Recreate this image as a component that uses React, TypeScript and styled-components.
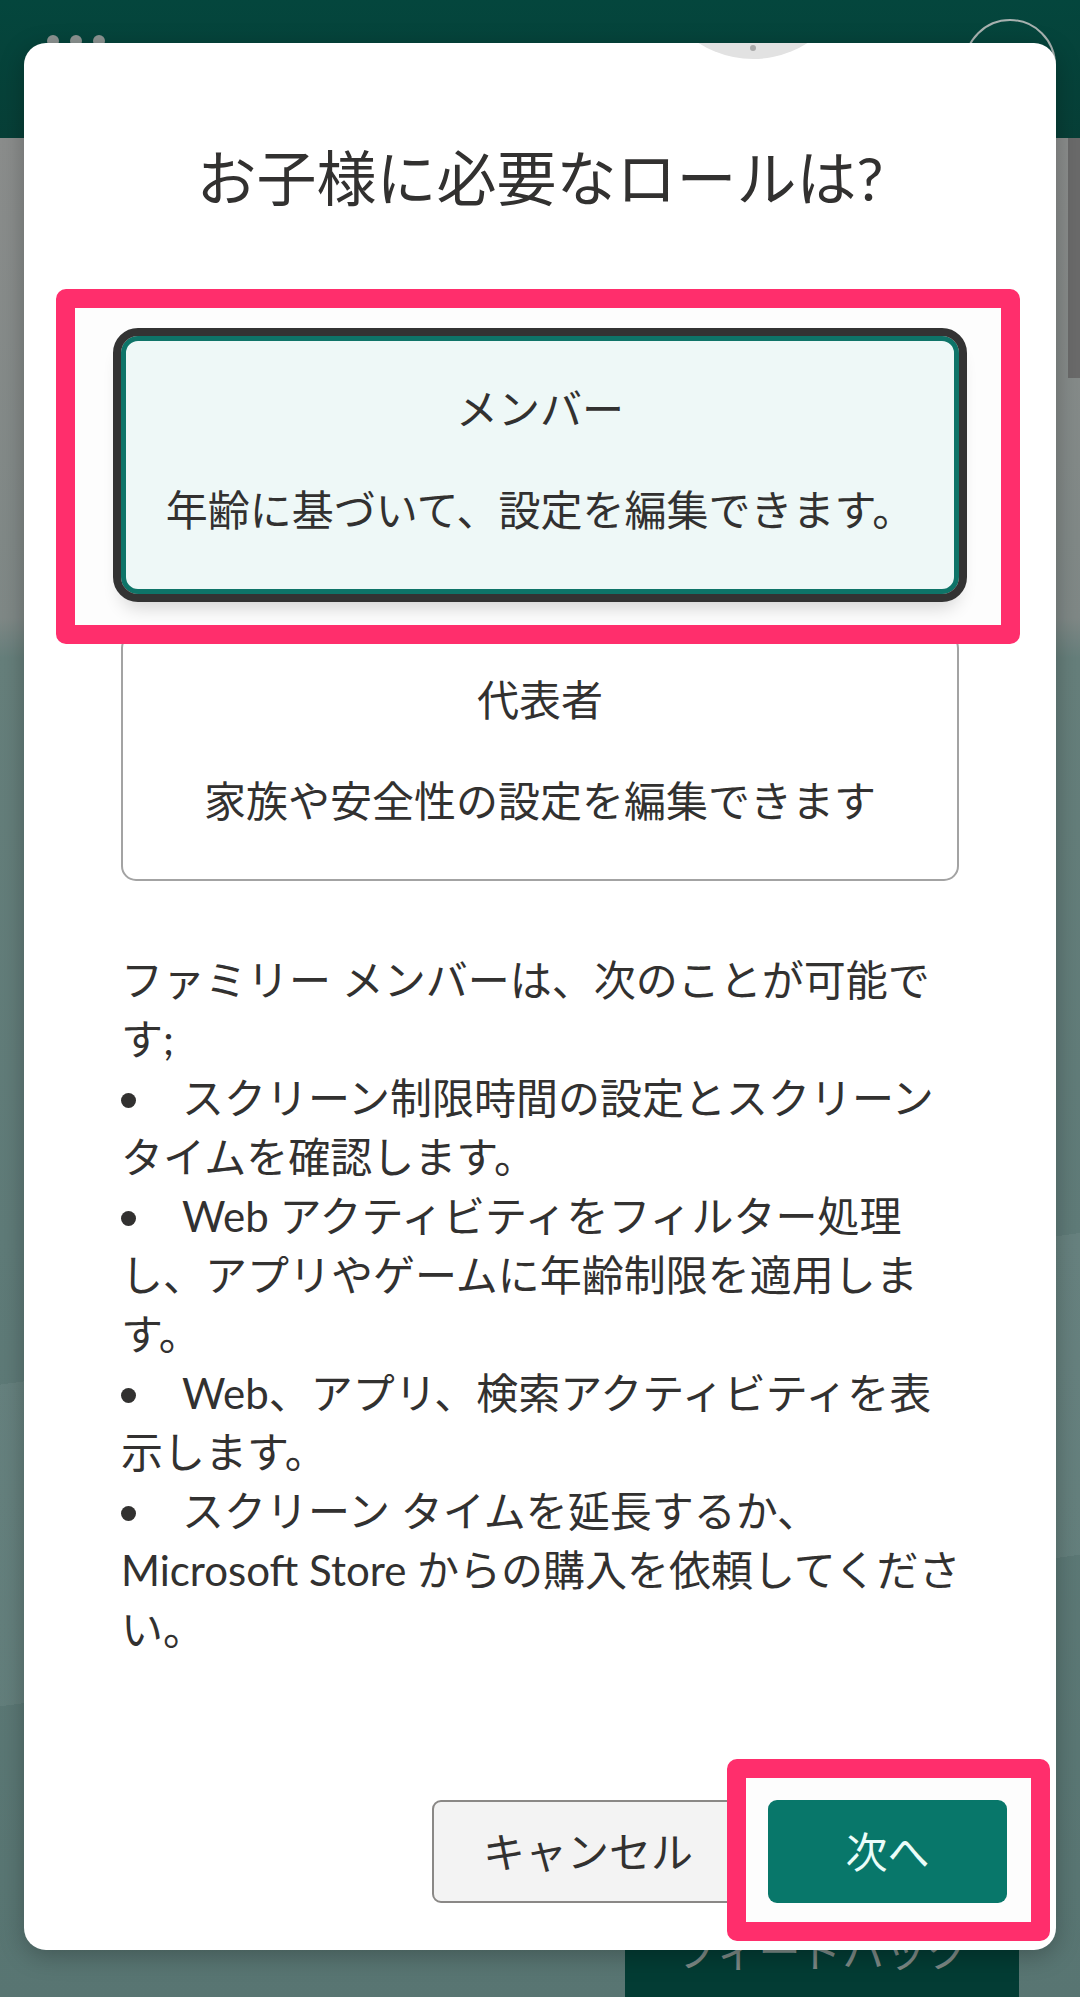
import React from 'react';
import styled, { createGlobalStyle } from 'styled-components';

const GlobalStyle = createGlobalStyle`
  html, body {
    margin: 0;
    padding: 0;
    background: #5d7a77;
  }
  * {
    box-sizing: border-box;
  }
`;

const FONT = `"Lato", "Noto Sans CJK JP", sans-serif`;

const Page = styled.div`
  position: relative;
  width: 1080px;
  height: 1997px;
  overflow: hidden;
  display: flex;
  flex-direction: column;
  font-family: ${FONT};
`;

const AppHeader = styled.header`
  position: relative;
  height: 138px;
  flex-shrink: 0;
  background: linear-gradient(180deg, #04463d 0%, #073f37 100%);
  display: flex;
  align-items: flex-start;
  padding: 35px 0 0 47px;
`;

const MoreDots = styled.div`
  display: flex;
  gap: 11px;
`;

const Dot = styled.span`
  width: 12px;
  height: 12px;
  border-radius: 50%;
  background: #8c9391;
`;

const Ring = styled.div`
  position: absolute;
  left: 964px;
  top: 19px;
  width: 92px;
  height: 92px;
  border-radius: 50%;
  border: 2px solid #a7b1af;
`;

const Backdrop = styled.div`
  position: relative;
  flex: 1;
  background:
    linear-gradient(172deg, transparent 0 62%, rgba(255, 255, 255, 0.05) 62% 78%, transparent 78%),
    linear-gradient(180deg, #8b8d8c 0px, #7f8886 480px, #667f7b 520px, #5f7b78 1100px, #587572 1860px);
`;

const ScrollThumb = styled.div`
  position: absolute;
  right: 0;
  top: 0;
  width: 12px;
  height: 240px;
  background: #6a6a6a;
`;

const FeedbackButton = styled.div`
  position: absolute;
  left: 625px;
  top: 1780px;
  width: 394px;
  height: 130px;
  border-radius: 16px;
  background: #033c34;
  color: #7b8784;
  font-size: 42px;
  display: flex;
  justify-content: center;
`;

const Dialog = styled.section`
  position: absolute;
  left: 24px;
  top: 43px;
  width: 1032px;
  height: 1907px;
  border-radius: 22px;
  overflow: hidden;
  background: #ffffff;
  box-shadow: 0 6px 24px rgba(0, 0, 0, 0.25);
  display: flex;
  flex-direction: column;
  padding: 98px 49px 47px;
  color: #323130;
`;

const Illustration = styled.div`
  position: absolute;
  left: 628px;
  top: -186px;
  width: 202px;
  height: 202px;
  border-radius: 50%;
  background: #e2e2e2;
  &::after {
    content: '';
    position: absolute;
    left: 98px;
    top: 188px;
    width: 6px;
    height: 6px;
    border-radius: 50%;
    background: #a9a9a9;
  }
`;

const Title = styled.h1`
  margin: 0 0 120px;
  font-size: 60px;
  line-height: 75px;
  font-weight: 400;
  text-align: center;
  color: #323130;
`;

const Column = styled.div`
  padding: 0 48px;
  display: flex;
  flex-direction: column;
`;

const Highlight = styled.div<{ $top: number; $right: number; $bottom: number; $left: number }>`
  position: relative;
  z-index: 1;
  &::before {
    content: '';
    position: absolute;
    z-index: -1;
    top: -${(p) => p.$top}px;
    right: -${(p) => p.$right}px;
    bottom: -${(p) => p.$bottom}px;
    left: -${(p) => p.$left}px;
    border: 19px solid #ff2e6c;
    border-radius: 10px;
    background: #fdfdfd;
  }
`;

const RoleCard = styled.div<{ $selected?: boolean }>`
  display: flex;
  flex-direction: column;
  align-items: center;
  gap: 42px;
  border-radius: ${(p) => (p.$selected ? '17px' : '15px')};
  border: ${(p) => (p.$selected ? '5px solid #0e7468' : '2px solid #a3a3a3')};
  background: ${(p) => (p.$selected ? '#eef8f7' : '#ffffff')};
  padding: ${(p) => (p.$selected ? '39px 16px 49px' : '36px 16px 48px')};
  outline: ${(p) => (p.$selected ? '8px solid #333333' : 'none')};
  box-shadow: ${(p) => (p.$selected ? '0 14px 18px rgba(0, 0, 0, 0.16)' : 'none')};
`;

const SecondCard = styled.div`
  margin-top: 39px;
`;

const RoleName = styled.div`
  font-size: 42px;
  line-height: 59px;
`;

const RoleDesc = styled.div`
  font-size: 42px;
  line-height: 59px;
  white-space: nowrap;
`;

const Info = styled.div`
  margin: 70px -6px 0 0;
  font-size: 42px;
  line-height: 59px;
  color: #323130;
`;

const Bullet = styled.span`
  display: inline-block;
  width: 15px;
  height: 15px;
  margin-right: 46px;
  border-radius: 50%;
  background: #323130;
  vertical-align: middle;
  position: relative;
  top: -3px;
`;

const Spacer = styled.div`
  flex: 1;
`;

const ButtonRow = styled.div`
  display: flex;
  justify-content: flex-end;
  gap: 24px;
`;

const Button = styled.button<{ $primary?: boolean }>`
  height: 103px;
  width: ${(p) => (p.$primary ? '239px' : '312px')};
  border-radius: 9px;
  font-family: ${FONT};
  font-size: 42px;
  cursor: pointer;
  background: ${(p) => (p.$primary ? '#08776a' : '#f3f3f3')};
  color: ${(p) => (p.$primary ? '#eafdf9' : '#323130')};
  border: ${(p) => (p.$primary ? 'none' : '2px solid #8a8886')};
  display: flex;
  align-items: center;
  justify-content: center;
  padding: 0 0 4px;
`;

export default function App() {
  return (
    <>
      <GlobalStyle />
      <Page>
        <AppHeader>
          <MoreDots>
            <Dot />
            <Dot />
            <Dot />
          </MoreDots>
          <Ring />
        </AppHeader>
        <Backdrop>
          <ScrollThumb />
          <FeedbackButton>フィードバック</FeedbackButton>
        </Backdrop>

        <Dialog role="dialog">
          <Illustration />
          <Title>お子様に必要なロールは?</Title>
          <Column>
            <Highlight $top={47} $right={61} $bottom={50} $left={65}>
              <RoleCard $selected>
                <RoleName>メンバー</RoleName>
                <RoleDesc>年齢に基づいて、設定を編集できます。</RoleDesc>
              </RoleCard>
            </Highlight>
            <SecondCard>
              <RoleCard>
                <RoleName>代表者</RoleName>
                <RoleDesc>家族や安全性の設定を編集できます</RoleDesc>
              </RoleCard>
            </SecondCard>
            <Info>
              <div>ファミリー メンバーは、次のことが可能です;</div>
              <div>
                <Bullet />スクリーン制限時間の設定とスクリーン タイムを確認します。
              </div>
              <div>
                <Bullet />Web アクティビティをフィルター処理し、アプリやゲームに年齢制限を適用します。
              </div>
              <div>
                <Bullet />Web、アプリ、検索アクティビティを表示します。
              </div>
              <div>
                <Bullet />スクリーン タイムを延長するか、Microsoft Store からの購入を依頼してください。
              </div>
            </Info>
          </Column>
          <Spacer />
          <ButtonRow>
            <Button>キャンセル</Button>
            <Highlight $top={41} $right={43} $bottom={38} $left={41}>
              <Button $primary>次へ</Button>
            </Highlight>
          </ButtonRow>
        </Dialog>
      </Page>
    </>
  );
}
